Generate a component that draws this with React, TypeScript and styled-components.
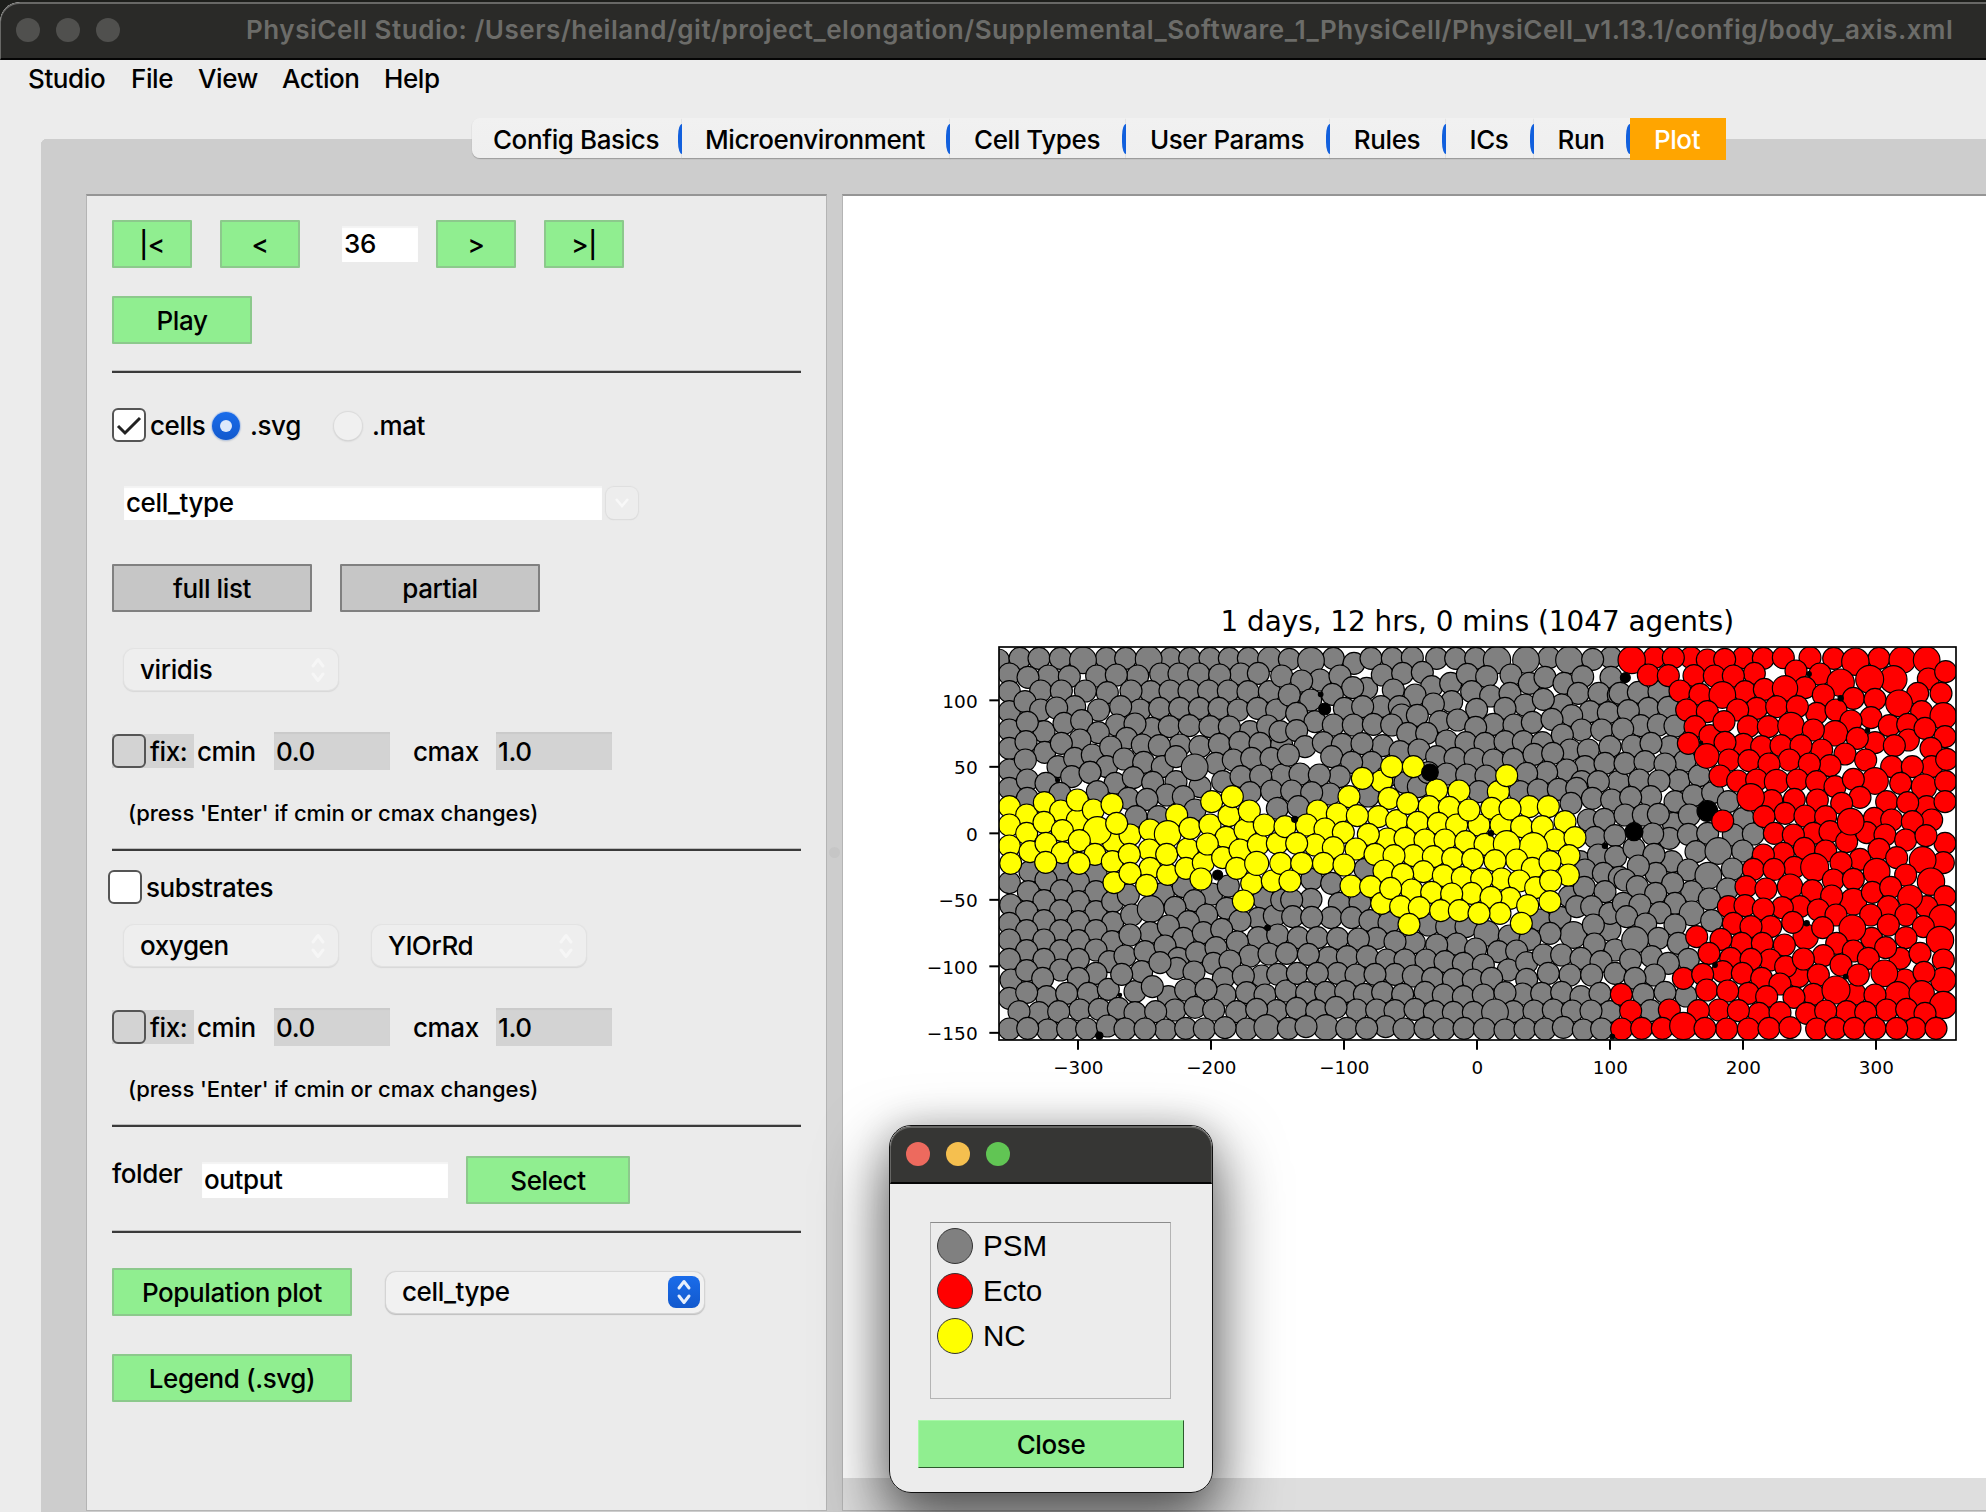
import React from "react";
import styled, { createGlobalStyle, css } from "styled-components";

const GlobalStyle = createGlobalStyle`
  * { box-sizing: border-box; }
  html, body { margin: 0; padding: 0; }
  body {
    width: 1986px;
    height: 1512px;
    overflow: hidden;
    background: #1d1e1b;
    font-family: Inter, "Liberation Sans", sans-serif;
    font-size: 26px;
    color: #000;
  }
`;

const uiText = css`
  font-family: Inter, "Liberation Sans", sans-serif;
  font-size: 26px;
  font-weight: 450;
  letter-spacing: -0.4px;
  line-height: 32px;
  white-space: nowrap;
  color: #000;
`;

const Screen = styled.div`
  position: relative;
  width: 1986px;
  height: 1512px;
  padding-top: 2px;
  overflow: hidden;
  background: #1d1e1b;
`;

const Window = styled.main`
  display: flex;
  flex-direction: column;
  height: 1510px;
  border-top-left-radius: 20px;
  overflow: hidden;
  background: #ececec;
`;

const TitleBar = styled.header`
  display: flex;
  align-items: center;
  flex: none;
  height: 58px;
  padding: 0 0 2px 15px;
  border-top: 2px solid #686866;
  border-left: 1px solid #686866;
  border-bottom: 2px solid #050505;
  border-top-left-radius: 20px;
  background: #2a2a28;
`;

const Lights = styled.div`
  display: flex;
  gap: 16px;
`;

const Light = styled.span<{ $color: string }>`
  width: 24px;
  height: 24px;
  border-radius: 50%;
  background: ${(p) => p.$color};
`;

const Title = styled.h1`
  margin: 0 0 0 126px;
  font-size: 26px;
  font-weight: 600;
  line-height: 32px;
  letter-spacing: 0.525px;
  white-space: nowrap;
  color: #6c6c69;
`;

const MenuBar = styled.nav`
  display: flex;
  flex: none;
  height: 58px;
  padding: 3px 0 0 28px;
`;

const MenuItem = styled.span<{ $w: number }>`
  ${uiText}
  width: ${(p) => p.$w}px;
`;

const TabPane = styled.section`
  display: flex;
  flex-direction: column;
  flex: 1;
  margin-left: 41px;
`;

const TabStrip = styled.div`
  display: flex;
  flex: none;
  height: 76px;
  padding-left: 431px;
  background:
    radial-gradient(circle at 6px 27px, #cdcdcd 6px, #ececec 6.5px) 0 0 / 6px 27px no-repeat,
    linear-gradient(#ececec 21px, #cdcdcd 21px);
`;

const Tab = styled.div<{ $w: number; $first?: boolean }>`
  ${uiText}
  display: flex;
  align-items: center;
  justify-content: center;
  width: ${(p) => p.$w}px;
  height: 40px;
  padding-top: 3px;
  padding-right: 2px;
  border-radius: ${(p) => (p.$first ? "8px 0 0 8px" : "0")};
  background: linear-gradient(#f1f1f1, #efefef);
  box-shadow: 0 1px 1px #9c9c9c;
`;

const TabDivider = styled.i`
  width: 4px;
  height: 30px;
  margin: 6px 0 0 -4px;
  z-index: 1;
  border-radius: 4px 0 0 4px / 12px 0 0 12px;
  background: #1260dd;
`;

const ActiveTab = styled(Tab)`
  height: 42px;
  padding-top: 1px;
  background: #ffa500;
  color: #fff;
  box-shadow: none;
`;

const PaneBody = styled.div`
  display: flex;
  flex: 1;
  padding: 0 0 2px 45px;
  background: #cdcdcd;
`;

const ControlPanel = styled.section`
  flex: none;
  width: 741px;
  height: 1317px;
  padding: 24px 25px 0 25px;
  border: 1px solid #b4b4b4;
  border-top: 2px solid #959595;
  background: #ebebeb;
`;

const Splitter = styled.div`
  display: flex;
  align-items: center;
  justify-content: center;
  flex: none;
  width: 15px;
`;

const Grip = styled.i`
  width: 11px;
  height: 11px;
  border-radius: 50%;
  background: #c6c6c6;
`;

const PlotPanel = styled.section`
  flex: 1;
  height: 1317px;
  border: 1px solid #b4b4b4;
  border-top: 2px solid #959595;
  border-right: none;
  background: linear-gradient(#fff 1282px, #dedede 1282px);
`;

const Row = styled.div<{ $h: number; $mt?: number; $pl?: number }>`
  display: flex;
  align-items: center;
  height: ${(p) => p.$h}px;
  margin-top: ${(p) => p.$mt ?? 0}px;
  padding-left: ${(p) => p.$pl ?? 0}px;
`;

const Button = styled.button<{ $w: number; $ml?: number; $gray?: boolean }>`
  ${uiText}
  flex: none;
  width: ${(p) => p.$w}px;
  height: 48px;
  margin: 0 0 0 ${(p) => p.$ml ?? 0}px;
  padding: 2px 0 0;
  border: 2px solid ${(p) => (p.$gray ? "#808080" : "#8cc98c")};
  border-radius: 1px;
  background: ${(p) => (p.$gray ? "#c6c6c6" : "#90ee90")};
`;

const Field = styled.div<{ $w: number; $h: number; $ml?: number; $gray?: boolean }>`
  ${uiText}
  display: flex;
  align-items: center;
  flex: none;
  width: ${(p) => p.$w}px;
  height: ${(p) => p.$h}px;
  margin-left: ${(p) => p.$ml ?? 0}px;
  padding-left: 2px;
  padding-top: ${(p) => (p.$gray ? 2 : 0)}px;
  background: ${(p) => (p.$gray ? "#d3d3d3" : "#fff")};
  box-shadow: inset 0 2px 1px ${(p) => (p.$gray ? "#cacaca" : "#f3f3f3")};
`;

const Label = styled.span<{ $w?: number; $ml?: number }>`
  ${uiText}
  flex: none;
  width: ${(p) => (p.$w ? p.$w + "px" : "auto")};
  margin-left: ${(p) => p.$ml ?? 0}px;
  padding-top: 2px;
`;

const FolderLabel = styled(Label)`
  align-self: flex-start;
`;

const Hint = styled.p`
  ${uiText}
  margin: 0;
  font-size: 22px;
  letter-spacing: -0.06px;
`;

const Rule = styled.hr<{ $mt: number }>`
  height: 3px;
  margin: ${(p) => p.$mt}px 0 0;
  border: none;
  border-top: 1px solid #bcbcbc;
  background: #3a3a3a;
`;

const Box = styled.span<{ $filled?: boolean; $ml?: number }>`
  display: flex;
  align-items: center;
  justify-content: center;
  flex: none;
  width: 34px;
  height: 34px;
  margin-left: ${(p) => p.$ml ?? 0}px;
  border: 2px solid #555;
  border-radius: 6px;
  background: ${(p) => (p.$filled ? "#fff" : "transparent")};
`;

const FixGroup = styled.span`
  display: flex;
  align-items: center;
  width: 82px;
  height: 34px;
  background: #d3d3d3;
`;

const Radio = styled.span<{ $on?: boolean; $ml: number }>`
  display: flex;
  align-items: center;
  justify-content: center;
  flex: none;
  width: 28px;
  height: 28px;
  margin-left: ${(p) => p.$ml}px;
  margin-top: 2px;
  border-radius: 50%;
  background: ${(p) => (p.$on ? "linear-gradient(#1a6cea, #1259cd)" : "#f0f0f0")};
  box-shadow: 0 0 1px 1px ${(p) => (p.$on ? "#b9cbea" : "#dadada")}, 0 1px 2px #bbb;
  &::after {
    content: "";
    width: 12px;
    height: 12px;
    border-radius: 50%;
    background: ${(p) => (p.$on ? "#dce8fb" : "transparent")};
  }
`;

const DropButton = styled.span`
  display: flex;
  align-items: center;
  justify-content: center;
  width: 32px;
  height: 32px;
  margin-left: 4px;
  border-radius: 8px;
  background: #ededed;
  box-shadow: 0 0 1px 1px #dedede, 0 1px 1px #cfcfcf;
`;

const Select = styled.div<{ $w: number; $ml?: number; $active?: boolean }>`
  ${uiText}
  display: flex;
  align-items: center;
  justify-content: space-between;
  flex: none;
  width: ${(p) => p.$w}px;
  height: 41px;
  margin-left: ${(p) => p.$ml ?? 0}px;
  padding: 0 ${(p) => (p.$active ? 4 : 11)}px 0 16px;
  border-radius: 10px;
  background: ${(p) => (p.$active ? "#f1f1f1" : "#eeeeee")};
  box-shadow: 0 0 1px 1px ${(p) => (p.$active ? "#d6d6d6" : "#e3e3e3")},
    0 1px 1px 1px ${(p) => (p.$active ? "#bdbdbd" : "#d6d6d6")};
`;

const Stepper = styled.span<{ $active?: boolean }>`
  display: flex;
  align-items: center;
  justify-content: center;
  width: ${(p) => (p.$active ? 32 : 18)}px;
  height: 32px;
  border-radius: 8px;
  background: ${(p) => (p.$active ? "linear-gradient(#1a6cea, #1259cd)" : "transparent")};
`;

const PlotSvg = styled.svg`
  display: block;
  margin: 394px 0 0 57px;
  text {
    font-family: "DejaVu Sans", sans-serif;
    fill: #000;
  }
`;

const Dialog = styled.aside`
  position: absolute;
  left: 889px;
  top: 1125px;
  width: 324px;
  height: 368px;
  border: 1px solid #111;
  border-radius: 22px;
  overflow: hidden;
  background: #ececec;
`;

const DialogShadow = styled.div`
  position: absolute;
  left: 889px;
  top: 1125px;
  width: 324px;
  height: 368px;
  border-radius: 22px;
  box-shadow: 0 30px 64px 6px rgba(0, 0, 0, 0.58), 0 0 34px rgba(0, 0, 0, 0.16);
`;

const DialogBar = styled.header`
  display: flex;
  align-items: center;
  height: 58px;
  padding: 0 0 2px 15px;
  border: 2px solid #666664;
  border-left-width: 1px;
  border-right-width: 1px;
  border-bottom: 2px solid #050505;
  border-radius: 21px 21px 0 0;
  background: #363634;
`;

const DialogBody = styled.div`
  display: flex;
  flex-direction: column;
  padding: 38px 28px 0;
`;

const LegendFrame = styled.ul`
  display: flex;
  flex-direction: column;
  gap: 9px;
  width: 241px;
  height: 177px;
  margin: 0 0 21px 12px;
  padding: 5px 0 0 6px;
  border: 1px solid #b4b4b4;
  border-top-color: #8b8b8b;
  list-style: none;
`;

const LegendItem = styled.li`
  display: flex;
  align-items: center;
  gap: 10px;
  height: 36px;
  font: 29.6px/34px "Liberation Sans", Arial, sans-serif;
`;

const Swatch = styled.i<{ $color: string }>`
  width: 36px;
  height: 36px;
  border: 1px solid #333;
  border-radius: 50%;
  background: ${(p) => p.$color};
`;

const CloseButton = styled.button`
  ${uiText}
  width: 266px;
  height: 48px;
  padding: 2px 0 0;
  border: 1px solid;
  border-color: #a8f8a8 #2c5a2c #2c5a2c #a8f8a8;
  background: #90ee90;
`;

/* Cell centres: "x,y" or "x,y,radius", in thirds of a pixel, one block per third of the axes. */
type Block = { dx: number; gray: string; red: string; yellow: string; black: string };

const blocks: Block[] = [
  {
    dx: 0,
    gray: `295,210 360,205 417,205 481,205 619,205 677,205 549,211,40 812,205 746,208,40 869,205 930,205 988,205 1045,205 1110,208,37
      328,252 445,258 384,262 508,260 590,258 713,258 649,255 782,252 837,252 896,252 1022,252 959,255 1075,250
      328,305 422,303 484,303 622,308 556,303 752,305 693,303 810,303 867,303 926,303 985,303 1044,305 1108,305
      328,365 375,335 422,360 524,350 470,354 596,360 720,360 662,350 779,355 839,355 898,355 957,355 1015,360 1073,355 1130,360
      328,420 432,425 492,400 382,397 545,392 650,405 595,428 755,415 705,402 808,410 868,407 930,410 1050,425 988,411 1103,408
      328,475 378,455 434,487 540,450 484,460 680,445 727,465 840,465 778,467 900,470 958,463 1020,457 1080,460 1145,465
      328,540 376,510 474,530 524,505 577,495 632,471 620,530 570,547 672,507 731,517 787,530 948,520 828,500 1000,510 1055,505 1113,505
      328,595 382,570 438,580 515,560 570,547 645,580 700,563 758,577 828,575 900,590 884,532,40 968,575 1023,560 1147,555 1082,558
      382,625 480,610 592,605 685,625 800,615 741,628 850,620 885,660 1050,608 1115,603 708,680 775,680 1132,655
      390,845 483,843 588,850 438,870 535,875 328,878 385,905 484,902 588,905 432,932 535,935 332,945 380,965 482,962 588,965 638,935
      432,992 535,995 638,997 328,1000 380,1022 482,1022 588,1022 432,1050 328,1050 535,1052 636,1055 380,1082 482,1082 588,1080 432,1108 328,1108 535,1108 628,1115
      333,1170 380,1142 482,1140 428,1165 588,1150 535,1165 328,1225 440,1220 380,1207 500,1210 565,1210 705,1205 625,1198
      685,915 790,910 850,890 935,912 985,888 883,932 1090,925 695,975 825,952 752,957,40 980,955 920,975 865,995 1075,985 1123,978 1020,992
      750,1028 690,1035 805,1008 850,1045 910,1028 965,1018 1075,1043 1012,1056 1133,1035 675,1098 735,1085 795,1068 835,1105 890,1088 948,1073 1050,1098 1107,1092
      725,1145 665,1153 830,1135 780,1118 940,1120 990,1113 882,1146 970,1165 1085,1158 1030,1158 1133,1153
      805,1220 757,1190 857,1200 975,1215 918,1198 1040,1208 1095,1215 1158,1203
      417,1268 357,1265 540,1260 476,1265 598,1258 655,1255 705,1268 825,1260 767,1265 885,1252 1010,1265 941,1260 1130,1262 1070,1258
      328,1317 443,1320 383,1315 503,1317 560,1317 622,1308 675,1317 797,1320 735,1317 857,1315 913,1317 1040,1317 975,1313 1100,1312,38`,
    red: ``,
    yellow: `328,650 380,675 433,638 482,663 532,690 532,630 580,660 636,643 328,705 380,730 432,697 487,722 640,755 592,722,42 690,735 650,700
      328,768 390,785 438,760 487,788 538,752 585,793 332,820 437,817 537,820 750,720 637,815 642,878 748,780 688,793 750,835 690,850 740,886
      830,675 803,732,40 803,853 800,793 863,777 870,715 858,835 910,818 903,867 935,635 930,705 987,677 978,742 922,762 997,620 968,803
      1035,720 1048,663 1020,780 1075,763 1055,880 1010,835 1070,820,36 1030,933 1132,760 1093,705 1117,873 1142,820`,
    black: `473,570,6 953,855,15 1103,1013,8 598,1337,11 660,1215,5`,
  },
  {
    dx: 1140,
    gray: `28,208 160,205 93,212,40 222,220 273,205 337,205 397,203 470,205 527,205 587,205 651,210,41 807,203 738,210,40 868,210,41 993,203 938,208
      5,258 60,310 120,270 65,273 180,258 260,295 218,293 307,255 368,250 427,247 340,300 455,290 405,315 512,280 562,253 620,260 575,305 632,318 693,255 690,310 748,280 795,262 852,280 908,260 895,310 993,262 957,310 1015,315
      28,315 92,330 157,313 50,370 193,355 303,350 248,350 358,350 365,375 515,335 460,342 412,376 590,358 735,345 675,355 845,345 790,328 930,365 875,377 985,368
      0,425 105,395 50,422 160,405 220,405 280,403 335,405 480,395 533,390 640,403 587,412 702,405 757,397 816,388 905,420 965,420
      75,470 130,458 187,463 308,467 246,461 383,430 440,430 500,453 558,458 615,460 675,455 730,455 787,458 847,435 870,480 925,480 990,470
      25,495 155,500 275,517 215,517 360,485 417,480 470,500 525,505 585,507 640,510 700,508 762,493 818,490 915,530 860,540 800,547 975,520
      60,552 178,560 118,555 320,560 375,578 415,590 445,548 500,552 560,555 618,558 740,550 720,605 775,600 835,598 905,575 1015,575 955,575
      35,603 150,612 95,608 265,618 55,650 597,605 890,595 873,640 937,625 995,630
      925,690 973,688 945,742 1005,737 900,815 955,795 1007,800 95,868 155,880 255,838 915,840 970,850 1018,862 868,920 913,892 975,905
      5,930 93,928 35,930 178,940 240,937 38,980 153,983 95,982 215,983 270,992 327,998 445,1005 500,1010 558,1010 620,1030,38 780,990 840,982 890,950 935,950 990,1020 990,970 880,1035,40 940,1005
      55,1043 112,1043 290,1045 173,1045 235,1047 403,1058 345,1055 530,1062 470,1065 587,1077 688,1038 810,1030 750,1048 1005,1080 943,1062 655,1085 710,1083
      20,1090 145,1103 85,1093 202,1100 262,1100 320,1110 375,1110 438,1110 495,1115 550,1120 610,1125 685,1140 740,1118 790,1095 845,1095 903,1105 963,1115
      52,1150 173,1150 112,1150 228,1155 345,1153 285,1153 400,1158 458,1165 520,1168 580,1170 635,1165 740,1168 870,1155 805,1150 935,1155 1005,1150
      80,1208 137,1207 197,1205 253,1213 308,1207 368,1213 435,1207 490,1215 550,1220 610,1215 728,1212 675,1208 785,1210 845,1207 903,1220 960,1210
      50,1255 110,1262 230,1260 168,1252 290,1260 345,1262 405,1258 463,1265 520,1267 580,1267 700,1265 645,1267,40 762,1263 820,1260 877,1263 990,1265 933,1263
      25,1315 138,1312,38 78,1310 200,1315 317,1310 260,1315 372,1317 435,1315 492,1317 552,1315 613,1317 675,1320 735,1317 795,1317 850,1312 910,1320 965,1317`,
    red: ``,
    yellow: `305,573 335,530 400,530 247,565 207,620 327,625 470,600 537,603 655,605 680,557
      113,663 172,672 295,680 232,677 350,692 447,650 383,640 508,652 413,697 475,700 530,705 597,705 567,660 635,655 748,650 663,705 690,657 805,650 725,710 855,695 787,710
      15,710 80,705 135,717 190,727 322,747 265,733 375,745 435,750 495,750 557,755 615,763 825,750 760,770,42 680,762,40 885,743
      105,765 50,760 228,777 160,773 285,793 400,797 342,797 460,800 518,805 578,808 710,810 645,812 757,835 867,797 810,815
      130,820 65,820 192,825 312,843 430,845 368,853 490,857 547,863 665,867 605,867 718,873 865,855 767,893 812,873
      30,873 213,888 272,890 305,940 395,900 332,895 455,907 575,910 515,912 690,925 633,922 362,950 418,953 482,962 538,962 660,970 597,970 810,935 743,947 387,1003 724,1000`,
    black: `134,357,18 450,547,25 122,313,7 44,688,9 633,730,8 975,767,8 997,1340,7`,
  },
  {
    dx: 2160,
    gray: `0,310 55,307 117,305 85,355 25,362 145,352 62,407 115,405 165,408 8,417 38,468 150,470 93,460 15,520 75,515 195,513 135,522
      58,570 177,572 117,573 238,557 92,620 32,622 165,635 220,617 278,608 325,635 15,675 70,675 160,700 208,675 115,673 370,685
      148,745 98,732 205,733 263,730 340,735 400,732 42,775 155,815 102,793 228,785 368,783 295,783,40 108,850 55,828 205,840 337,837 265,857,40
      15,870 10,940 52,890 215,905 158,880 107,910 323,897 60,945 165,940 120,968 215,970,37 268,927 20,980 165,1005 77,1002 275,992
      115,1045 45,1050,40 175,1060 95,1100 32,1110 205,1108 145,1120 103,1155 45,1165 70,1213 198,1218 135,1207 92,1262`,
    red: `103,203 35,210,41 213,203 160,203 262,210 370,203 314,208 430,205 490,203 570,203 641,205 777,205 706,215,41 847,210,40 920,210,40
      85,255 145,257 222,257 283,258 403,250 340,258 528,243 600,252 820,268,41 749,268,42 662,278,41 925,267 977,245
      180,303 375,305 240,313 307,315,40 433,298 555,293 495,295,38 610,315 700,325 765,328 893,310 837,340,40 963,310
      200,360 262,365 410,355 353,360 470,350 590,370 532,350 648,360 753,383 693,393 905,365 970,378,40 808,407 863,403
      225,410 270,437 312,395 385,410 445,410 513,407,40 645,430,38 580,420 765,458 712,445 865,450 915,415 975,440
      205,460 370,463 315,457 425,470 483,467 605,480 543,467 675,492 737,510 823,467 933,475
      327,510 260,498,37 387,512 508,510 447,522 630,527 568,522 815,530 935,530 877,530 980,508
      300,558 353,573 410,570 470,575,37 532,570 590,575 645,590 765,573,40 700,568 842,580 912,590,38 977,575
      455,632 392,622,41 523,628 592,630 720,622 665,640 800,635 920,650 863,638 975,635
      495,670 432,680 555,678 617,680 763,685 815,690 935,690 877,695 580,730 630,725 463,730 520,735 680,755 740,728 692,695,40 795,735 857,750 975,760 918,737
      490,790 430,795 553,775 617,783 720,808 663,818 777,778 830,803 970,818 908,810,40
      400,838 523,832 462,838 584,832,42 640,870 770,845,40 700,868 857,855 933,875,41
      378,890 510,890,38 438,897 577,902 700,935,40 635,918 757,907 812,892 975,920 920,950 870,922,37
      325,950 375,947 540,950 487,953 430,957 595,960 648,975 805,950 752,975 858,975 968,985,41
      340,1000 452,1010 393,1010 557,1040,38 518,997 608,1013 755,1045 697,1015,40 805,1005 910,1010 858,1043
      230,1040 365,1060 303,1048 427,1060 493,1065 650,1060 700,1083 960,1050,41 840,1105 797,1073 900,1090
      332,1105 267,1090 450,1110 393,1108 535,1160 497,1130 610,1097 550,1107 663,1125 745,1105 970,1110
      190,1165 308,1145 248,1153 367,1150 425,1165 480,1182 595,1155 705,1212 855,1170 715,1155 793,1150,40 970,1170,38 912,1147
      4,1213 260,1200 385,1210 323,1203 440,1220 580,1213 522,1222 648,1200,42 833,1213,38 765,1215 905,1210,38
      148,1260 32,1263 297,1260 235,1262 417,1270 355,1262 480,1268 560,1270 680,1265 617,1263 800,1260 737,1267 860,1258 970,1245,41 915,1270
      5,1317 65,1315 127,1315 190,1308,41 320,1317 255,1315 385,1317 447,1315 510,1313 590,1317 647,1315 703,1315 765,1315 885,1315 830,1315 948,1315`,
    yellow: ``,
    black: `262,663,31 42,725,27 16,263,15 567,252,7 662,325,8 742,422,7 560,1000,8 285,1125,7 677,1160,7 243,458,5`,
  },
];

const parse = (list: string) =>
  list
    .trim()
    .split(/\s+/)
    .filter(Boolean)
    .map((c) => c.split(",").map(Number));

const Cells = ({ list, fill }: { list: string; fill: string }) => (
  <g fill={fill}>
    {parse(list).map(([x, y, r = 33], i) => (
      <circle key={i} cx={x} cy={y} r={r} />
    ))}
  </g>
);

const kinds = [
  ["gray", "#808080"],
  ["red", "#ff0000"],
  ["yellow", "#ffff00"],
  ["black", "#000000"],
] as const;

const xTicks = [-300, -200, -100, 0, 100, 200, 300];
const yTicks = [100, 50, 0, -50, -100, -150];
const tickLabel = (v: number) => String(v).replace("-", "\u2212");

const CellPlot = () => (
  <PlotSvg width={1086} height={500} viewBox="0 0 3258 1500">
    <defs>
      <clipPath id="axes">
        <rect x={297} y={171} width={2871} height={1179} />
      </clipPath>
    </defs>
    <g clipPath="url(#axes)" stroke="#000" strokeWidth={3.4}>
      {kinds.map(([kind, fill]) =>
        blocks.map((b) => (
          <g key={kind + b.dx} transform={`translate(${b.dx} 0)`}>
            <Cells list={b[kind]} fill={fill} />
          </g>
        ))
      )}
      <circle cx={2468} cy={693} r={33} fill="#ff0000" />
    </g>
    <rect x={297} y={171} width={2871} height={1179} fill="none" stroke="#000" strokeWidth={5} />
    {xTicks.map((v) => {
      const x = 1731 + v * 3.99;
      return (
        <g key={v}>
          <line x1={x} x2={x} y1={1350} y2={1379} stroke="#000" strokeWidth={6} />
          <text x={x + 1} y={1452} fontSize={55} textAnchor="middle">
            {tickLabel(v)}
          </text>
        </g>
      );
    })}
    {yTicks.map((v) => {
      const y = 730 - v * 3.99;
      return (
        <g key={v}>
          <line x1={268} x2={297} y1={y} y2={y} stroke="#000" strokeWidth={6} />
          <text x={233} y={y + 22} fontSize={55.5} textAnchor="end">
            {tickLabel(v)}
          </text>
        </g>
      );
    })}
    <text x={1732} y={122} fontSize={83.4} textAnchor="middle">
      1 days, 12 hrs, 0 mins (1047 agents)
    </text>
  </PlotSvg>
);

const UpDown = ({ color }: { color: string }) => (
  <svg width={18} height={28} viewBox="0 0 18 28" fill="none" stroke={color} strokeWidth={3} strokeLinecap="round" strokeLinejoin="round">
    <path d="M4 10 L9 3.5 L14 10 M4 18 L9 24.5 L14 18" />
  </svg>
);

const FixRow = ({ mt }: { mt: number }) => (
  <Row $h={38} $mt={mt}>
    <FixGroup>
      <Box />
      <Label $ml={4}>fix:</Label>
    </FixGroup>
    <Label $ml={3} $w={77}>cmin</Label>
    <Field $w={116} $h={38} $gray>0.0</Field>
    <Label $ml={23} $w={83}>cmax</Label>
    <Field $w={116} $h={38} $gray>1.0</Field>
  </Row>
);

const tabs: [string, number][] = [
  ["Config Basics", 210],
  ["Microenvironment", 268],
  ["Cell Types", 176],
  ["User Params", 204],
  ["Rules", 116],
  ["ICs", 88],
  ["Run", 96],
];

const menus: [string, number][] = [
  ["Studio", 103],
  ["File", 67],
  ["View", 84],
  ["Action", 102],
  ["Help", 80],
];

export default function App() {
  return (
    <Screen>
      <GlobalStyle />
      <Window>
        <TitleBar>
          <Lights>
            <Light $color="#50504e" />
            <Light $color="#50504e" />
            <Light $color="#50504e" />
          </Lights>
          <Title>
            PhysiCell Studio: /Users/heiland/git/project_elongation/Supplemental_Software_1_PhysiCell/PhysiCell_v1.13.1/config/body_axis.xml
          </Title>
        </TitleBar>
        <MenuBar>
          {menus.map(([name, w]) => (
            <MenuItem key={name} $w={w}>{name}</MenuItem>
          ))}
        </MenuBar>
        <TabPane>
          <TabStrip>
            {tabs.map(([name, w], i) => (
              <React.Fragment key={name}>
                <Tab $w={w} $first={i === 0}>{name}</Tab>
                <TabDivider />
              </React.Fragment>
            ))}
            <ActiveTab $w={96}>Plot</ActiveTab>
          </TabStrip>
          <PaneBody>
            <ControlPanel>
              <Row $h={48}>
                <Button $w={80}>|&lt;</Button>
                <Button $w={80} $ml={28}>&lt;</Button>
                <Field $w={76} $h={36} $ml={42}>36</Field>
                <Button $w={80} $ml={18}>&gt;</Button>
                <Button $w={80} $ml={28}>&gt;|</Button>
              </Row>
              <Row $h={48} $mt={28}>
                <Button $w={140}>Play</Button>
              </Row>
              <Rule $mt={26} />
              <Row $h={34} $mt={35}>
                <Box $filled>
                  <svg width={28} height={28} viewBox="0 0 28 28" fill="none" stroke="#222" strokeWidth={3}>
                    <path d="M3 15 L10 22 L25 7" />
                  </svg>
                </Box>
                <Label $ml={4} $w={58}>cells</Label>
                <Radio $on $ml={4} />
                <Label $ml={10} $w={84}>.svg</Label>
                <Radio $ml={0} />
                <Label $ml={10}>.mat</Label>
              </Row>
              <Row $h={34} $mt={44} $pl={12}>
                <Field $w={478} $h={34}>cell_type</Field>
                <DropButton>
                  <svg width={16} height={12} viewBox="0 0 16 12" fill="none" stroke="#f8f8f8" strokeWidth={2.5}>
                    <path d="M2 2 L8 9 L14 2" />
                  </svg>
                </DropButton>
              </Row>
              <Row $h={48} $mt={44}>
                <Button $w={200} $gray>full list</Button>
                <Button $w={200} $ml={28} $gray>partial</Button>
              </Row>
              <Row $h={41} $mt={37} $pl={12}>
                <Select $w={214}>viridis<Stepper><UpDown color="#f6f6f6" /></Stepper></Select>
              </Row>
              <FixRow mt={42} />
              <Row $h={32} $mt={27} $pl={16}>
                <Hint>(press 'Enter' if cmin or cmax changes)</Hint>
              </Row>
              <Rule $mt={19} />
              <Row $h={34} $mt={19}>
                <Box $filled $ml={-4} />
                <Label $ml={4}>substrates</Label>
              </Row>
              <Row $h={41} $mt={21} $pl={12}>
                <Select $w={214}>oxygen<Stepper><UpDown color="#f6f6f6" /></Stepper></Select>
                <Select $w={214} $ml={34}>YlOrRd<Stepper><UpDown color="#f6f6f6" /></Stepper></Select>
              </Row>
              <FixRow mt={42} />
              <Row $h={32} $mt={27} $pl={16}>
                <Hint>(press 'Enter' if cmin or cmax changes)</Hint>
              </Row>
              <Rule $mt={19} />
              <Row $h={48} $mt={29}>
                <FolderLabel $w={90}>folder</FolderLabel>
                <Field $w={246} $h={36}>output</Field>
                <Button $w={164} $ml={18}>Select</Button>
              </Row>
              <Rule $mt={26} />
              <Row $h={48} $mt={35}>
                <Button $w={240}>Population plot</Button>
                <Select $w={318} $ml={34} $active>
                  cell_type
                  <Stepper $active><UpDown color="#e6effc" /></Stepper>
                </Select>
              </Row>
              <Row $h={48} $mt={38}>
                <Button $w={240}>Legend (.svg)</Button>
              </Row>
            </ControlPanel>
            <Splitter><Grip /></Splitter>
            <PlotPanel>
              <CellPlot />
            </PlotPanel>
          </PaneBody>
        </TabPane>
      </Window>
      <DialogShadow />
      <Dialog>
        <DialogBar>
          <Lights>
            <Light $color="#ed6a5e" />
            <Light $color="#f5bf4f" />
            <Light $color="#61c554" />
          </Lights>
        </DialogBar>
        <DialogBody>
          <LegendFrame>
            <LegendItem><Swatch $color="#808080" />PSM</LegendItem>
            <LegendItem><Swatch $color="#ff0000" />Ecto</LegendItem>
            <LegendItem><Swatch $color="#ffff00" />NC</LegendItem>
          </LegendFrame>
          <CloseButton>Close</CloseButton>
        </DialogBody>
      </Dialog>
    </Screen>
  );
}
